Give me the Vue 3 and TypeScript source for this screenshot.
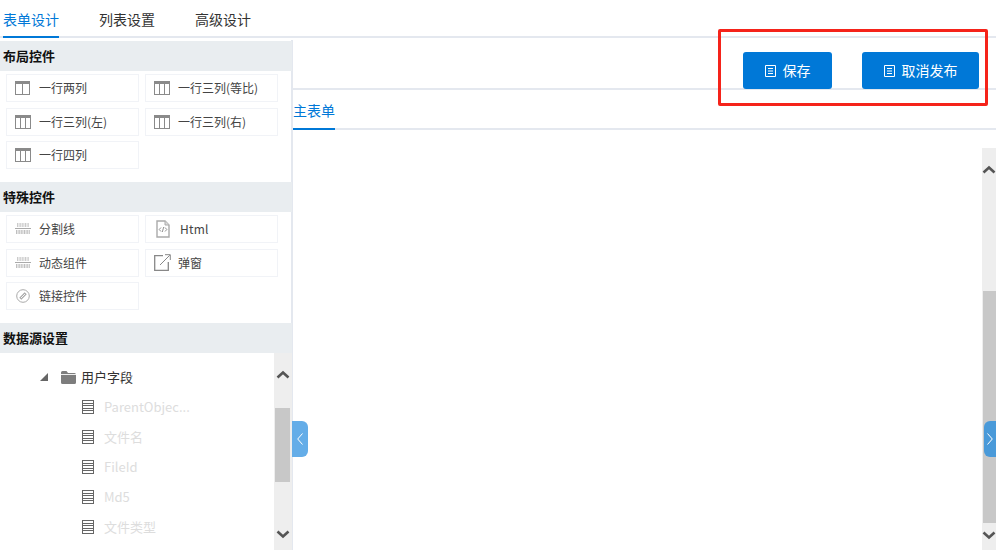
<script setup lang="ts">
const layout = [
  { label: '一行两列', cols: 2 },
  { label: '一行三列(等比)', cols: 3 },
  { label: '一行三列(左)', cols: 3 },
  { label: '一行三列(右)', cols: 3 },
  { label: '一行四列', cols: 3 },
]
const fields = ['ParentObjec...', '文件名', 'FileId', 'Md5', '文件类型']
</script>

<template>
  <div class="page">
    <nav class="tabs">
      <span class="tab active">表单设计</span>
      <span class="tab">列表设置</span>
      <span class="tab">高级设计</span>
    </nav>
    <div class="main">
      <aside class="side">
        <h3 class="head">布局控件</h3>
        <div class="grid">
          <div v-for="c in layout" :key="c.label" class="cell">
            <svg class="ic" width="16" height="14" viewBox="0 0 16 14">
              <rect x="0" y="0" :width="c.cols === 2 ? 15 : 16" height="3" fill="#8a8a8a" />
              <rect x=".5" y=".5" :width="c.cols === 2 ? 14 : 15" height="13" fill="none" stroke="#8a8a8a" />
              <template v-if="c.cols === 2"><path d="M7.5 1v12" stroke="#8a8a8a" /></template>
              <template v-else><path d="M5.5 1v12M10.5 1v12" stroke="#8a8a8a" /></template>
            </svg>
            <span class="txt">{{ c.label }}</span>
          </div>
        </div>
        <h3 class="head">特殊控件</h3>
        <div class="grid">
          <div class="cell">
            <svg class="ic" width="16" height="12" viewBox="0 0 16 12">
              <path d="M2 1h12M2 3h12" stroke="#bbb" stroke-width="1.400" stroke-dasharray="1 .6" />
              <path d="M0 5.500h16" stroke="#aaa" />
              <path d="M1 8h14M1 10h14" stroke="#aaa" stroke-width="1.400" stroke-dasharray="1 .6" />
            </svg>
            <span class="txt">分割线</span>
          </div>
          <div class="cell html">
            <svg class="ic doc" width="14" height="18" viewBox="0 0 14 18">
              <path d="M1 1h8l4 4v12H1z" fill="none" stroke="#aaa" stroke-width="1.400" />
              <path d="M9 1v4h4" fill="#ddd" stroke="#aaa" />
              <path d="M5 7.500 3.200 9.500 5 11.500M9 7.500l1.800 2L9 11.500M7.700 7 6.300 12" fill="none" stroke="#777" stroke-width=".8" />
            </svg>
            <span class="latin">Html</span>
          </div>
          <div class="cell">
            <svg class="ic" width="16" height="12" viewBox="0 0 16 12">
              <path d="M2 1h12M2 3h12" stroke="#bbb" stroke-width="1.400" stroke-dasharray="1 .6" />
              <path d="M0 5.500h16" stroke="#aaa" />
              <path d="M1 8h14M1 10h14" stroke="#aaa" stroke-width="1.400" stroke-dasharray="1 .6" />
            </svg>
            <span class="txt">动态组件</span>
          </div>
          <div class="cell">
            <svg class="ic pop" width="17" height="17" viewBox="0 0 17 17">
              <path d="M9 1.700H.7V16.300H14.300V8" fill="none" stroke="#888" stroke-width="1.300" />
              <path d="M6 11 15.800 1.200M11 .7H16.300V6" fill="none" stroke="#888" />
            </svg>
            <span class="txt">弹窗</span>
          </div>
          <div class="cell">
            <svg class="ic link" width="14" height="14" viewBox="0 0 14 14">
              <circle cx="7" cy="7" r="6.300" fill="none" stroke="#aaa" />
              <path d="M4.300 9.700 9.700 4.300" stroke="#aaa" stroke-width="3" />
              <path d="M5 9 9 5" stroke="#fff" stroke-width=".9" />
            </svg>
            <span class="txt">链接控件</span>
          </div>
        </div>
        <h3 class="head">数据源设置</h3>
        <div class="tree">
          <div class="tree-list">
            <div class="node root">
              <svg class="tri" width="8" height="8" viewBox="0 0 8 8"><path d="M8 0v8H0z" fill="#666" /></svg>
              <svg class="folder" width="15" height="13" viewBox="0 0 15 13">
                <path d="M0 1.500Q0 0 1.500 0h4L7 2h6.500Q15 2 15 3.500V11.500Q15 13 13.500 13h-12Q0 13 0 11.500z" fill="#7d7d7d" />
                <path d="M0 3.500h15" stroke="#eee" />
              </svg>
              <span class="tt">用户字段</span>
            </div>
            <div v-for="f in fields" :key="f" class="node leaf">
              <svg width="12" height="14" viewBox="0 0 12 14">
                <rect x=".5" y=".5" width="11" height="13" fill="none" stroke="#666" />
                <path d="M1 3.500h10M1 5.500h10M1 8.500h10M1 10.500h10" stroke="#666" />
              </svg>
              <span class="tt">{{ f }}</span>
            </div>
          </div>
          <div class="bar small">
            <svg class="arrow" width="14" height="9" viewBox="0 0 14 9"><path d="M1.500 7.500 7 2.500l5.500 5" fill="none" stroke="#555" stroke-width="2.600" /></svg>
            <div class="thumb"></div>
            <svg class="arrow" width="14" height="9" viewBox="0 0 14 9"><path d="M1.500 1.500 7 6.500l5.500-5" fill="none" stroke="#555" stroke-width="2.600" /></svg>
          </div>
        </div>
      </aside>
      <section class="content">
        <div class="tools">
          <button class="btn b1">
            <svg width="11" height="12" viewBox="0 0 11 12"><path d="M.5.500h10v11H.5zM3 3.500h5M3 6h5M3 8.500h5" fill="none" stroke="#fff" /></svg>
            <span class="btxt">保存</span>
          </button>
          <button class="btn b2">
            <svg width="11" height="12" viewBox="0 0 11 12"><path d="M.5.500h10v11H.5zM3 3.500h5M3 6h5M3 8.500h5" fill="none" stroke="#fff" /></svg>
            <span class="btxt">取消发布</span>
          </button>
        </div>
        <div class="subtabs"><span class="sub">主表单</span></div>
        <div class="canvas">
          <div class="bar large">
            <svg class="arrow" width="14" height="9" viewBox="0 0 14 9"><path d="M1.500 7.500 7 2.500l5.500 5" fill="none" stroke="#555" stroke-width="2.600" /></svg>
            <div class="thumb"></div>
            <svg class="arrow" width="14" height="9" viewBox="0 0 14 9"><path d="M1.500 1.500 7 6.500l5.500-5" fill="none" stroke="#555" stroke-width="2.600" /></svg>
          </div>
        </div>
      </section>
    </div>
    <div class="handle left">
      <svg width="6" height="12" viewBox="0 0 6 12"><path d="M5.500.500 .700 6l4.800 5.500" fill="none" stroke="#fff" /></svg>
    </div>
    <div class="handle right">
      <svg width="6" height="12" viewBox="0 0 6 12"><path d="M.5.500 5.300 6 .5 11.500" fill="none" stroke="#fff" /></svg>
    </div>
    <div class="mark"></div>
  </div>
</template>

<style scoped>
.page {
  position: relative;
  width: 996px;
  height: 550px;
  overflow: hidden;
  display: flex;
  flex-direction: column;
  background: #fff;
  color: #333;
  font-family: "Noto Sans CJK SC", "Noto Sans", sans-serif;
}
.tabs {
  display: flex;
  gap: 40px;
  height: 36px;
  padding-left: 3px;
  border-bottom: 2px solid #e4e8ef;
  flex: none;
}
.tab {
  height: 36px;
  margin-bottom: -2px;
  box-sizing: content-box;
  padding-bottom: 2px;
  font-size: 14px;
  line-height: 38px;
}
.tab.active {
  color: #0078d7;
  border-bottom: 2px solid #0078d7;
  padding-bottom: 0;
}
.main {
  flex: 1;
  display: flex;
  min-height: 0;
}
.side {
  width: 293px;
  box-sizing: border-box;
  flex: none;
  margin-top: 2px;
  padding-top: 1px;
  border-right: 2px solid #e4e8ef;
  display: flex;
  flex-direction: column;
}
.head {
  margin: 0 -1px 0 0;
  height: 30px;
  padding-left: 3px;
  background: #e9edf0;
  color: #111;
  font-size: 13px;
  font-weight: 700;
  line-height: 30px;
  flex: none;
}
.grid {
  display: grid;
  grid-template-columns: 133px 133px;
  column-gap: 6px;
  row-gap: 5.5px;
  grid-auto-rows: 28px;
  padding: 3px 0 13px 6px;
  height: 111px;
  box-sizing: border-box;
  flex: none;
}
.cell {
  display: flex;
  align-items: center;
  border: 1px solid #f1f3f7;
  padding-left: 8px;
  font-size: 12px;
  color: #444;
}
.txt {
  line-height: 1;
}
.tt {
  line-height: 1;
  margin-top: -2px;
}
.btxt {
  line-height: 1;
  margin-top: -2px;
}
.ic {
  flex: none;
  margin-right: 8px;
}
.doc {
  margin: 0 10px 0 2px;
}
.pop {
  margin-right: 7px;
}
.link {
  margin: 0 9px 0 1px;
}
.latin {
  font-size: 12px;
  letter-spacing: .2px;
  line-height: 1;
}
.tree {
  flex: 1;
  min-height: 0;
  display: flex;
}
.tree-list {
  flex: 1;
  min-width: 0;
  padding-top: 9px;
}
.node {
  display: flex;
  align-items: center;
  height: 30px;
  font-size: 13px;
}
.root {
  padding-left: 40px;
  color: #333;
}
.tri {
  margin-right: 13px;
}
.folder {
  margin-right: 5px;
}
.leaf {
  padding-left: 82px;
  color: #ddd;
  gap: 10px;
}
.bar {
  background: #eee;
  display: flex;
  flex-direction: column;
  align-items: center;
  flex: none;
}
.arrow {
  flex: none;
}
.bar.small {
  width: 18px;
  padding: 17px 0 11px;
  box-sizing: border-box;
  margin-right: -1px;
}
.bar.small .thumb {
  width: 15px;
  height: 74px;
  margin: 29px 2px 0 0;
  background: #c8c8c8;
}
.bar.small .arrow:last-child {
  margin-top: auto;
}
.content {
  flex: 1;
  min-width: 0;
  display: flex;
  flex-direction: column;
}
.tools {
  flex: none;
  display: flex;
  justify-content: flex-end;
  gap: 30px;
  padding: 14px 17px 0 0;
  border-bottom: 2px solid #e4e8ef;
  box-sizing: border-box;
  height: 52px;
}
.btn {
  height: 37px;
  border: 0;
  border-radius: 3px;
  background: #0078d7;
  color: #fff;
  font: inherit;
  font-size: 14px;
  display: flex;
  align-items: center;
  justify-content: center;
  gap: 7px;
  padding: 0;
}
.b1 {
  width: 89px;
}
.b2 {
  width: 117px;
}
.subtabs {
  height: 40px;
  box-sizing: border-box;
  border-bottom: 2px solid #e4e8ef;
  flex: none;
}
.sub {
  display: inline-block;
  height: 40px;
  box-sizing: border-box;
  border-bottom: 2px solid #0078d7;
  color: #0078d7;
  font-size: 14px;
  line-height: 40px;
}
.canvas {
  flex: 1;
  min-height: 0;
  display: flex;
  justify-content: flex-end;
  padding-top: 18px;
}
.bar.large {
  width: 14px;
  padding: 17px 0 0;
}
.bar.large .thumb {
  width: 13px;
  align-self: flex-end;
  flex: 1;
  margin: 117px 0 0;
  background: #c8c8c8;
}
.bar.large .arrow:last-child {
  margin: 8px 0 10px;
}
.handle {
  position: absolute;
  top: 421px;
  height: 36px;
  display: flex;
  align-items: center;
  justify-content: center;
}
.handle.left {
  left: 292px;
  width: 16px;
  background: #64ade8;
  border-radius: 0 6px 6px 0;
}
.handle.right {
  left: 984px;
  width: 12px;
  background: #4a9ad9;
  border-radius: 6px 0 0 6px;
}
.mark {
  position: absolute;
  left: 718px;
  top: 29px;
  width: 270px;
  height: 77px;
  box-sizing: border-box;
  border: 3px solid #f5231a;
  border-radius: 2px;
}
</style>
